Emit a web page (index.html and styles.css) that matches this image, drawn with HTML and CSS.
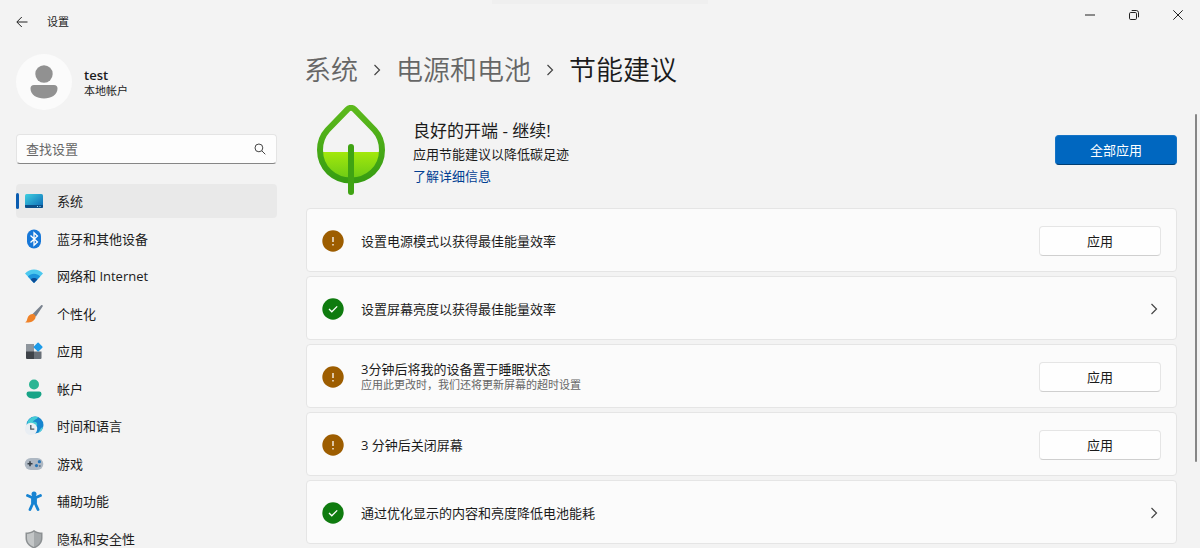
FILE: index.html
```html
<!DOCTYPE html>
<html lang="zh-CN">
<head>
  <meta charset="UTF-8" />
  <title>设置</title>
  <link rel="stylesheet" href="styles.css">
</head>
<body>

<!-- Title bar -->
<header class="titlebar">
  <button class="back" aria-label="返回">
    <svg width="12" height="12" viewBox="0 0 12 12"><path d="M11.5 6H1M5.8 1L.8 6l5 5" /></svg>
  </button>
  <span class="app-name">设置</span>
  <div class="window-buttons">
    <button aria-label="最小化"><svg width="10" height="10" viewBox="0 0 10 10"><path d="M0 5h10" /></svg></button>
    <button aria-label="还原"><svg width="10" height="10" viewBox="0 0 10 10"><rect x=".5" y="2.5" width="7" height="7" rx="1.2" /><path d="M2.7.5h4.6a2.2 2.2 0 0 1 2.2 2.2v4.6" /></svg></button>
    <button aria-label="关闭"><svg width="10" height="10" viewBox="0 0 10 10"><path d="M.3.3l9.4 9.4M9.7.3L.3 9.7" /></svg></button>
  </div>
</header>

<div class="layout">
  <!-- Sidebar -->
  <aside class="sidebar">
    <div class="profile">
      <div class="avatar">
        <svg width="28" height="34" viewBox="0 0 28 34"><circle cx="14" cy="9" r="8.7" /><path d="M4 20h20a3.5 3.5 0 0 1 3.5 3.5C27.500 30 21 33.500 14 33.500S.5 30 .5 23.500A3.500 3.500 0 0 1 4 20z" /></svg>
      </div>
      <div class="user">
        <div class="user-name">test</div>
        <div class="user-type">本地帐户</div>
      </div>
    </div>

    <label class="search">
      <input type="text" placeholder="查找设置" aria-label="查找设置" />
      <svg width="12" height="12" viewBox="0 0 12 12"><circle cx="4.900" cy="4.900" r="3.900" /><path d="M7.800 7.800l3.500 3.500" /></svg>
    </label>

    <nav class="menu">
      <a href="#" class="active">
        <svg viewBox="0 0 20 20"><defs><linearGradient id="screen" x1="0" y1="0" x2="1" y2="1"><stop offset="0" stop-color="#3fd0e0" /><stop offset="1" stop-color="#0a66b5" /></linearGradient></defs><rect x="1" y="3" width="18" height="14" rx="1.500" fill="url(#screen)" /><path d="M1 14h18v1.500a1.500 1.500 0 0 1-1.500 1.500h-15A1.500 1.500 0 0 1 1 15.500z" fill="#0b4f88" /><path d="M13 15.500h1M15.500 15.500h1" stroke="#9fe0f5" /></svg>
        系统
      </a>
      <a href="#">
        <svg viewBox="0 0 20 20"><rect x="3" y=".5" width="14" height="19" rx="7" fill="#1677d8" /><path d="M6.500 6.500l7 6.500-3.500 3.300V3.700L13.500 7l-7 6.500" fill="none" stroke="#fff" stroke-width="1.300" /></svg>
        蓝牙和其他设备
      </a>
      <a href="#">
        <svg viewBox="0 0 20 20"><path d="M1 7.500C6 2.200 14 2.200 19 7.500L10 17z" fill="#4cc8ee" /><path d="M3.800 10.400c3.500-3.400 8.900-3.400 12.400 0L10 17z" fill="#1c94dc" /><path d="M6.600 13.400c2-1.900 4.800-1.900 6.800 0L10 17z" fill="#0c4c96" /></svg>
        网络和 Internet
      </a>
      <a href="#">
        <svg viewBox="0 0 20 20"><path d="M17.200 1.300c.8-.7 2 .2 1.400 1.200l-6.800 10.300-3.200-2.700z" fill="#79828e" /><path d="M8.200 10.100c2.200-.3 4 1.800 3.200 3.900C10 18 5 19 1 18.300c1.700-.8 1.800-1.700 2.400-3.800.6-2.400 2.200-4.200 4.800-4.400z" fill="#ef8228" /></svg>
        个性化
      </a>
      <a href="#">
        <svg viewBox="0 0 20 20"><path d="M2 3h8v8H2z" fill="#8e959c" /><path d="M2 10.500h8V18H3a1 1 0 0 1-1-1z" fill="#3e4349" /><path d="M10 10.500h7.500V17a1 1 0 0 1-1 1H10z" fill="#686f77" /><rect x="10.700" y="2.700" width="6.800" height="6.800" rx=".8" transform="rotate(45 14.100 6.100)" fill="#1d9be8" /></svg>
        应用
      </a>
      <a href="#">
        <svg viewBox="0 0 20 20"><circle cx="10" cy="5.500" r="5" fill="#2bb594" /><path d="M4.800 12.500h10.400a2.300 2.300 0 0 1 2.300 2.300c0 3.200-3.600 4.900-7.500 4.900s-7.500-1.700-7.500-4.900a2.300 2.300 0 0 1 2.300-2.300z" fill="#18a487" /></svg>
        帐户
      </a>
      <a href="#">
        <svg viewBox="0 0 20 20"><circle cx="11" cy="9" r="8.500" fill="#1786cf" /><path d="M4 5c3-5 8-5 10-4-1 3-4 2-5 5 3-1 5 1 4 4l-6 2-4-4z" fill="#45ccd5" /><path d="M14 17c2-2 2-5 5-6-.4 3-2 5-5 6z" fill="#52cddc" /><circle cx="7" cy="13" r="6.200" fill="#e9eef3" /><path d="M6.800 9v4.200h3.500" fill="none" stroke="#4b5660" stroke-width="1.300" /></svg>
        时间和语言
      </a>
      <a href="#">
        <svg viewBox="0 0 20 20"><rect x=".7" y="4" width="18.600" height="12" rx="6" fill="#aeb8c3" /><path d="M3.500 9.700h5M6 7.200v5" stroke="#39424c" stroke-width="1.600" /><circle cx="15.400" cy="7.700" r="1.600" fill="#2774b6" /><circle cx="12.500" cy="11.600" r="1.600" fill="#2774b6" /><circle cx="15.800" cy="12" r="1" fill="#61778b" /></svg>
        游戏
      </a>
      <a href="#">
        <svg viewBox="0 0 20 20"><circle cx="10" cy="3" r="2.500" fill="#1683d2" /><path d="M3.500 4.500L8 6.500h4l4.500-2M10 7v5M8.500 7v6L6 18.500M11.500 7v6l2.500 5.500" fill="none" stroke="#1683d2" stroke-width="2.800" stroke-linecap="round" stroke-linejoin="round" /></svg>
        辅助功能
      </a>
      <a href="#">
        <svg viewBox="0 0 20 20"><path d="M10 1c2.500 1.800 5.300 2.500 8.500 2.600V9c0 5-3.500 8.500-8.500 10.500C5 17.500 1.500 14 1.500 9V3.600C4.700 3.500 7.500 2.800 10 1z" fill="#8c9092" /><path d="M10 2.800c2.200 1.400 4.500 2 7 2.200v4c0 4.200-2.800 7.200-7 9z" fill="#a5a9ab" /><path d="M10 2.800v15.200c-4.200-1.800-7-4.800-7-9V5c2.500-.2 4.800-.8 7-2.200z" fill="#c3c6c7" /></svg>
        隐私和安全性
      </a>
    </nav>
  </aside>

  <!-- Content -->
  <main class="content">
    <h1 class="breadcrumb">
      <a href="#">系统</a>
      <svg width="8" height="12" viewBox="0 0 8 12"><path d="M1.500 1l5 5-5 5" /></svg>
      <a href="#">电源和电池</a>
      <svg width="8" height="12" viewBox="0 0 8 12"><path d="M1.500 1l5 5-5 5" /></svg>
      <span>节能建议</span>
    </h1>

    <section class="summary">
      <svg class="leaf" width="70" height="90" viewBox="0 0 70 90">
        <defs>
          <linearGradient id="leafLine" x1="0" y1="0" x2="0" y2="1"><stop offset="0" stop-color="#5cb91c" /><stop offset="1" stop-color="#379d12" /></linearGradient>
          <linearGradient id="leafFill" x1="0" y1="0" x2="0" y2="1"><stop offset="0" stop-color="#a3e80c" /><stop offset="1" stop-color="#69c916" /></linearGradient>
        </defs>
        <path d="M4 47h62C65 64 51 75.500 35 75.500S5 64 4 47z" fill="url(#leafFill)" />
        <path d="M31.500 4.300L11.500 25C6 31 4 37 4 45c0 18 14 30.500 31 30.500S66 63 66 45c0-8-2-14-7.500-20l-20-20.700a5 5 0 0 0-7 0z" fill="none" stroke="url(#leafLine)" stroke-width="6" />
        <path d="M32 42a3 3 0 0 1 6 0v45a3 3 0 0 1-6 0z" fill="#3fa313" />
      </svg>
      <div class="summary-text">
        <h2>良好的开端 - 继续!</h2>
        <p>应用节能建议以降低碳足迹</p>
        <a href="#">了解详细信息</a>
      </div>
      <button class="btn btn-primary">全部应用</button>
    </section>

    <section class="cards">
      <div class="card">
        <svg class="status warn" viewBox="0 0 22 22"><circle cx="11" cy="11" r="10.700" /><path d="M11 7v5M11 14v1.400" /></svg>
        <div class="card-text">设置电源模式以获得最佳能量效率</div>
        <button class="btn">应用</button>
      </div>
      <div class="card">
        <svg class="status ok" viewBox="0 0 22 22"><circle cx="11" cy="11" r="10.700" /><path d="M7 11l2.800 2.800L15.200 8.400" /></svg>
        <div class="card-text">设置屏幕亮度以获得最佳能量效率</div>
        <button class="expand" aria-label="展开"><svg width="8" height="12" viewBox="0 0 8 12"><path d="M1.500 1l5 5-5 5" /></svg></button>
      </div>
      <div class="card">
        <svg class="status warn" viewBox="0 0 22 22"><circle cx="11" cy="11" r="10.700" /><path d="M11 7v5M11 14v1.400" /></svg>
        <div class="card-text">
          3分钟后将我的设备置于睡眠状态
          <small>应用此更改时，我们还将更新屏幕的超时设置</small>
        </div>
        <button class="btn">应用</button>
      </div>
      <div class="card">
        <svg class="status warn" viewBox="0 0 22 22"><circle cx="11" cy="11" r="10.700" /><path d="M11 7v5M11 14v1.400" /></svg>
        <div class="card-text">3 分钟后关闭屏幕</div>
        <button class="btn">应用</button>
      </div>
      <div class="card">
        <svg class="status ok" viewBox="0 0 22 22"><circle cx="11" cy="11" r="10.700" /><path d="M7 11l2.800 2.800L15.200 8.400" /></svg>
        <div class="card-text">通过优化显示的内容和亮度降低电池能耗</div>
        <button class="expand" aria-label="展开"><svg width="8" height="12" viewBox="0 0 8 12"><path d="M1.500 1l5 5-5 5" /></svg></button>
      </div>
    </section>
  </main>
</div>

<div class="top-handle"></div>
<div class="scroll-thumb"></div>

</body>
</html>
```
FILE: styles.css
```css
* {
  box-sizing: border-box;
}
body {
  margin: 0;
  height: 100vh;
  overflow: hidden;
  position: relative;
  background: #f3f3f3;
  color: #1b1b1b;
  font-family: "Open Sans", "Noto Sans CJK SC", sans-serif;
  font-size: 13px;
  line-height: 20px;
}
button, input {
  font: inherit;
  color: inherit;
}
button {
  border: none;
  background: none;
  padding: 0;
}
a {
  color: inherit;
  text-decoration: none;
}
svg {
  flex-shrink: 0;
}

/* Title bar */
.titlebar {
  display: flex;
  align-items: center;
  height: 44px;
  padding-left: 16px;
}
.titlebar svg {
  display: block;
  fill: none;
  stroke: #222;
  stroke-width: 1;
}
.app-name {
  margin-left: 19px;
  font-size: 11px;
}
.window-buttons {
  display: flex;
  align-self: flex-start;
  margin-left: auto;
}
.window-buttons button {
  display: flex;
  align-items: center;
  justify-content: center;
  width: 44px;
  height: 30px;
}

.layout {
  display: flex;
  gap: 29px;
  padding: 0 23px 0 16px;
}

/* Sidebar */
.sidebar {
  width: 261px;
  flex-shrink: 0;
  padding-top: 10px;
}
.profile {
  display: flex;
  align-items: center;
  gap: 12px;
}
.avatar {
  display: flex;
  align-items: center;
  justify-content: center;
  width: 56px;
  height: 56px;
  border-radius: 50%;
  background: #fbfbfb;
}
.avatar svg {
  fill: #919191;
}
.user {
  padding-top: 2px;
}
.user-name {
  font-weight: 600;
  line-height: 16px;
}
.user-type {
  font-size: 11px;
  line-height: 16px;
}
.search {
  display: flex;
  align-items: center;
  height: 30px;
  margin: 24px 0 20px;
  padding: 0 10px 0 9px;
  background: #fdfdfd;
  border: 1px solid #e4e4e4;
  border-bottom-color: #868686;
  border-radius: 4px;
}
.search input {
  flex: 1;
  min-width: 0;
  padding: 0;
  border: none;
  outline: none;
  background: none;
}
.search input::placeholder {
  color: #666;
}
.search svg {
  fill: none;
  stroke: #444;
}
.menu {
  display: flex;
  flex-direction: column;
  justify-content: space-between;
  min-height: 372px;
}
.menu a {
  display: flex;
  align-items: center;
  gap: 13px;
  height: 34px;
  padding-left: 8px;
  border-radius: 4px;
  position: relative;
}
.menu a.active {
  background: #e9e9e9;
}
.menu a.active::before {
  content: "";
  position: absolute;
  left: 0;
  top: 9px;
  width: 3px;
  height: 16px;
  border-radius: 2px;
  background: #0a5cb0;
}
.menu svg {
  width: 20px;
  height: 20px;
}

/* Content */
.content {
  flex: 1;
  min-width: 0;
}
.breadcrumb {
  display: flex;
  align-items: center;
  gap: 15px;
  margin: 6px 0 14px -2px;
  font-size: 27px;
  font-weight: 350;
  line-height: 40px;
}
.breadcrumb a {
  color: #666;
}
.breadcrumb svg,
.expand svg {
  display: block;
  fill: none;
  stroke: #444;
  stroke-width: 1.2;
}
.summary {
  display: flex;
  align-items: center;
  height: 92px;
  margin-bottom: 12px;
  padding-left: 10px;
}
.summary-text {
  flex: 1;
  margin-left: 27px;
  padding-top: 6px;
}
.summary-text h2 {
  margin: 0;
  font-size: 17px;
  font-weight: 400;
  line-height: 24px;
}
.summary-text p {
  margin: 0;
  line-height: 22px;
}
.summary-text a {
  display: block;
  color: #003e92;
  line-height: 22px;
}
.btn {
  width: 122px;
  height: 30px;
  background: #fefefe;
  border: 1px solid #e5e5e5;
  border-bottom-color: #cfcfcf;
  border-radius: 4px;
}
.btn-primary {
  background: #0067c0;
  border-color: #1473c5;
  border-bottom-color: #003e73;
  color: #fff;
}
.cards {
  display: flex;
  flex-direction: column;
  gap: 4px;
}
.card {
  display: flex;
  align-items: center;
  min-height: 64px;
  padding: 1px 15px 0;
  background: #fbfbfb;
  border: 1px solid #e5e5e5;
  border-radius: 4px;
}
.card-text {
  flex: 1;
  margin-left: 17px;
  line-height: 16px;
}
.card-text small {
  display: block;
  color: #666;
  font-size: 11px;
}
.status {
  width: 22px;
  height: 22px;
}
.status path {
  fill: none;
  stroke: #fff;
  stroke-width: 1.3;
}
.status.warn circle {
  fill: #9d5d00;
}
.status.ok circle {
  fill: #0f7b0f;
}
.expand {
  padding: 4px 3px;
}

/* Handle on the top edge of the window */
.top-handle {
  position: absolute;
  top: 0;
  left: 41%;
  right: 41%;
  height: 4px;
  background: #efefef;
}

/* Scrollbar */
.scroll-thumb {
  position: absolute;
  top: 114px;
  right: 3px;
  width: 2px;
  height: 348px;
  border-radius: 1px;
  background: #868686;
}
```
